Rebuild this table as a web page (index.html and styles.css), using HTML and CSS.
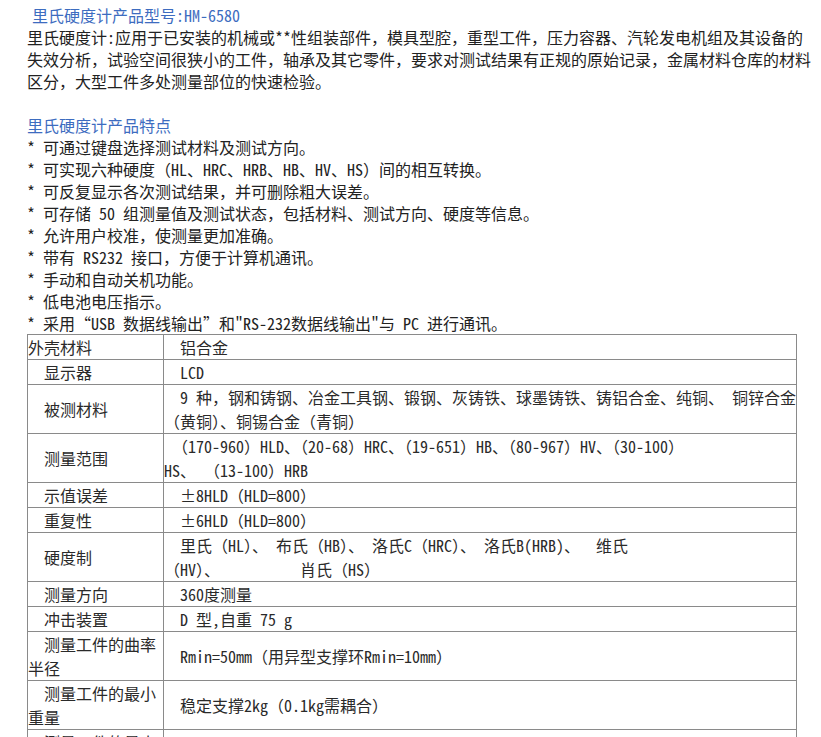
FILE: index.html
```html
<!DOCTYPE html>
<html lang="zh-CN">
<head>
<meta charset="utf-8">
<title>里氏硬度计产品型号:HM-6580</title>
<link rel="stylesheet" href="styles.css">
</head>
<body>
<div class="page">
  <div class="title first">里氏硬度计产品型号:HM-6580</div>
  <p class="intro">里氏硬度计:应用于已安装的机械或**性组装部件，模具型腔，重型工件，压力容器、汽轮发电机组及其设备的<br>失效分析，试验空间很狭小的工件，轴承及其它零件，要求对测试结果有正规的原始记录，金属材料仓库的材料<br>区分，大型工件多处测量部位的快速检验。</p>
  <div class="blank"></div>
  <div class="title">里氏硬度计产品特点</div>
  <ul class="features">
    <li>* 可通过键盘选择测试材料及测试方向。</li>
    <li>* 可实现六种硬度（HL、HRC、HRB、HB、HV、HS）间的相互转换。</li>
    <li>* 可反复显示各次测试结果，并可删除粗大误差。</li>
    <li>* 可存储 50 组测量值及测试状态，包括材料、测试方向、硬度等信息。</li>
    <li>* 允许用户校准，使测量更加准确。</li>
    <li>* 带有 RS232 接口，方便于计算机通讯。</li>
    <li>* 手动和自动关机功能。</li>
    <li>* 低电池电压指示。</li>
    <li>* 采用“USB 数据线输出”和"RS-232数据线输出"与 PC 进行通讯。</li>
  </ul>
  <table class="spec">
    <tr><td class="k k0">外壳材料</td><td class="v">铝合金</td></tr>
    <tr><td class="k">显示器</td><td class="v">LCD</td></tr>
    <tr><td class="k">被测材料</td><td class="v">9 种，钢和铸钢、冶金工具钢、锻钢、灰铸铁、球墨铸铁、铸铝合金、纯铜、 铜锌合金<br>（黄铜）、铜锡合金（青铜）</td></tr>
    <tr><td class="k">测量范围</td><td class="v v8">（170-960）HLD、（20-68）HRC、（19-651）HB、（80-967）HV、（30-100）<br>HS、 （13-100）HRB</td></tr>
    <tr><td class="k">示值误差</td><td class="v">±8HLD（HLD=800）</td></tr>
    <tr><td class="k">重复性</td><td class="v">±6HLD（HLD=800）</td></tr>
    <tr><td class="k">硬度制</td><td class="v pre">里氏（HL）、 布氏（HB）、 洛氏C（HRC）、 洛氏B(HRB)、  维氏<br>（HV）、          肖氏（HS）</td></tr>
    <tr><td class="k">测量方向</td><td class="v">360度测量</td></tr>
    <tr><td class="k">冲击装置</td><td class="v">D 型,自重 75 g</td></tr>
    <tr><td class="k">测量工件的曲率半径</td><td class="v">Rmin=50mm（用异型支撑环Rmin=10mm）</td></tr>
    <tr><td class="k">测量工件的最小重量</td><td class="v">稳定支撑2kg（0.1kg需耦合）</td></tr>
    <tr><td class="k">测量工件的最小厚度</td><td class="v">5mm</td></tr>
  </table>
</div>
</body>
</html>
```
FILE: styles.css
```css
html, body {
  margin: 0;
  padding: 0;
  background: #ffffff;
}

body {
  font-family: "Noto Sans Mono CJK SC", "Noto Sans CJK SC", "DejaVu Sans Mono", monospace;
  font-size: 16px;
  line-height: 22px;
  color: #222222;
}

.page {
  padding: 4px 0 0 27px;
  width: 788px;
}

.title {
  color: #3d6cc0;
  white-space: nowrap;
}

.title.first {
  padding-left: 5px;
}

.intro {
  margin: 0;
  white-space: nowrap;
}

.blank {
  height: 22px;
}

.features {
  list-style: none;
  margin: 0;
  padding: 0;
}

.features li {
  white-space: pre;
}

.spec {
  border-collapse: collapse;
  width: 770px;
  color: #2a2a2a;
  line-height: 24px;
}

.spec td {
  border: 1px solid #8a8a8a;
  padding: 0;
  vertical-align: middle;
}

.spec .k {
  width: 135px;
  text-indent: 16px;
}

.spec .k0 {
  text-indent: 0;
}

.spec .v {
  text-indent: 16px;
  white-space: nowrap;
}

.spec .v8 {
  text-indent: 8px;
}

.spec .pre {
  white-space: pre;
}
```
